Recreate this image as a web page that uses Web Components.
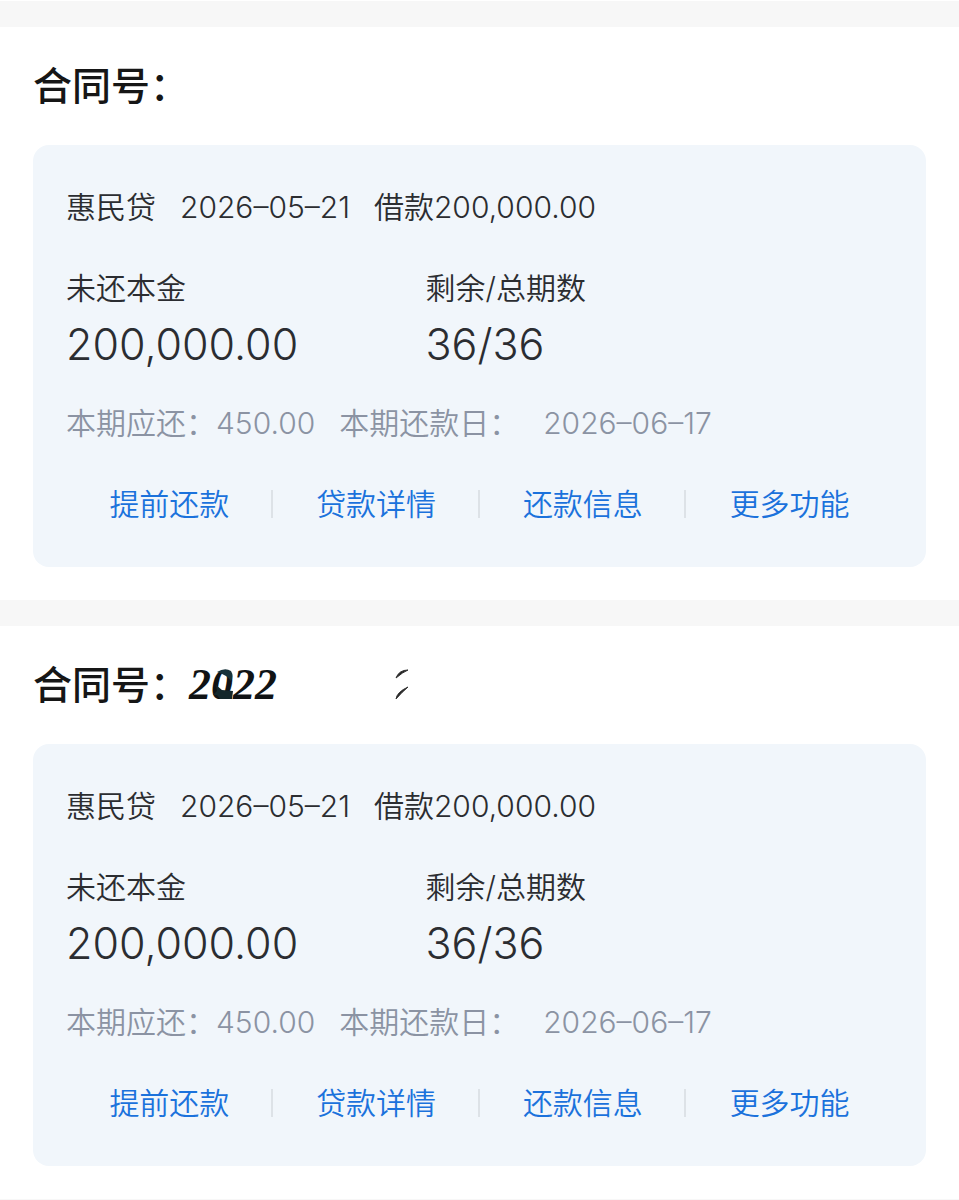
<!DOCTYPE html>
<html lang="zh-CN">
<head>
<meta charset="utf-8">
<meta name="viewport" content="width=device-width, initial-scale=1">
<title>贷款合同</title>
<style>
  body { margin: 0; background: #fff; font-family: Inter, "Noto Sans CJK SC", sans-serif; font-weight: 350; color: #2b2d31; }
</style>
</head>
<body>
<loan-list>
  <loan-contract></loan-contract>
  <loan-contract><erased-number slot="number"></erased-number></loan-contract>
</loan-list>

<template id="loan-list">
  <style>
    :host { display: block; padding-top: 1px; border-bottom: 1px solid #f7f7f7; }
  </style>
  <main><slot></slot></main>
</template>

<template id="loan-contract">
  <style>
    :host { display: block; border-top: 26px solid #f7f7f7; padding-bottom: 33px; }
    header { display: flex; align-items: center; padding: 34px 33px; }
    h2 { margin: 0; font-size: 39px; line-height: 50px; font-weight: 500; color: #161616; }
    loan-card { margin: 0 33px; }
  </style>
  <section>
    <header><h2>合同号：</h2><slot name="number"></slot></header>
    <loan-card>
      <loan-summary slot="summary"></loan-summary>
      <loan-figure label="未还本金">200,000.00</loan-figure>
      <loan-figure label="剩余/总期数">36/36</loan-figure>
      <loan-due slot="due"></loan-due>
      <loan-actions slot="actions"></loan-actions>
    </loan-card>
  </section>
</template>

<template id="loan-card">
  <style>
    :host { display: block; background: #f1f6fb; border-radius: 16px; padding: 38px 33px 43px; }
    .figures { display: grid; grid-template-columns: 10fr 13fr; margin: 37px 0 31px; }
  </style>
  <slot name="summary"></slot>
  <div class="figures"><slot></slot></div>
  <slot name="due"></slot>
  <slot name="actions"></slot>
</template>

<template id="loan-summary">
  <style>
    :host { display: flex; gap: 24px; font-size: 30px; line-height: 48px; white-space: nowrap; }
  </style>
  <span>惠民贷</span><time datetime="2026-05-21">2026–05–21</time><span>借款200,000.00</span>
</template>

<template id="loan-figure">
  <style>
    :host { display: block; }
    .label { font-size: 30px; line-height: 40px; }
    .value { font-size: 43px; line-height: 56px; margin-top: 8px; }
  </style>
  <div class="label"></div>
  <div class="value"><slot></slot></div>
</template>

<template id="loan-due">
  <style>
    :host { display: flex; gap: 24px; font-size: 30px; line-height: 40px; color: #8b93a3; white-space: nowrap; }
  </style>
  <span>本期应还：450.00</span><span>本期还款日：</span><time datetime="2026-06-17">2026–06–17</time>
</template>

<template id="loan-actions">
  <style>
    :host { display: block; margin-top: 41px; }
    nav { display: grid; grid-template-columns: repeat(4, 1fr); }
    button { display: flex; align-items: center; justify-content: center; position: relative; border: 0; padding: 0; background: none;
      font: inherit; font-size: 30px; line-height: 40px; color: #1b72dc; cursor: pointer; }
    button + button::before { content: ""; position: absolute; left: -2px; top: 6px; bottom: 6px; width: 2px; background: #dde2e7; }
  </style>
  <nav>
    <button type="button">提前还款</button>
    <button type="button">贷款详情</button>
    <button type="button">还款信息</button>
    <button type="button">更多功能</button>
  </nav>
</template>

<template id="erased-number">
  <style>
    :host { display: flex; position: relative; font: italic bold 44px/50px "Liberation Serif", serif; color: #101315; }
    svg { position: absolute; left: 0; top: 0; overflow: visible; }
  </style>
  <span>2022</span>
  <svg width="230" height="50" viewBox="0 0 230 50" aria-hidden="true">
    <path d="M28 12q8-5 14-1q3 5 0 10q-4-6-14-9z" fill="#17323a"/>
    <path d="M27 25l6 5 11 1-1 8h-12l-3-4h-4l4-4z" fill="#14272b"/>
    <path d="M207 18q3-8 12-8q-5 2-12 8zM207 39q1-7 12-12q-6 5-12 12z" fill="#222" stroke="#333"/>
  </svg>
</template>

<script>
  const attach = (host) => {
    const root = host.attachShadow({ mode: "open" });
    root.append(document.getElementById(host.localName).content.cloneNode(true));
    return root;
  };
  class LoanList extends HTMLElement { constructor() { super(); attach(this); } }
  class LoanContract extends HTMLElement { constructor() { super(); attach(this); } }
  class LoanCard extends HTMLElement { constructor() { super(); attach(this); } }
  class LoanSummary extends HTMLElement { constructor() { super(); attach(this); } }
  class LoanDue extends HTMLElement { constructor() { super(); attach(this); } }
  class LoanActions extends HTMLElement { constructor() { super(); attach(this); } }
  class ErasedNumber extends HTMLElement { constructor() { super(); attach(this); } }
  class LoanFigure extends HTMLElement {
    constructor() { super(); attach(this); }
    connectedCallback() { this.shadowRoot.querySelector(".label").textContent = this.getAttribute("label"); }
  }
  customElements.define("loan-figure", LoanFigure);
  customElements.define("loan-summary", LoanSummary);
  customElements.define("loan-due", LoanDue);
  customElements.define("loan-actions", LoanActions);
  customElements.define("erased-number", ErasedNumber);
  customElements.define("loan-card", LoanCard);
  customElements.define("loan-contract", LoanContract);
  customElements.define("loan-list", LoanList);
</script>
</body>
</html>
